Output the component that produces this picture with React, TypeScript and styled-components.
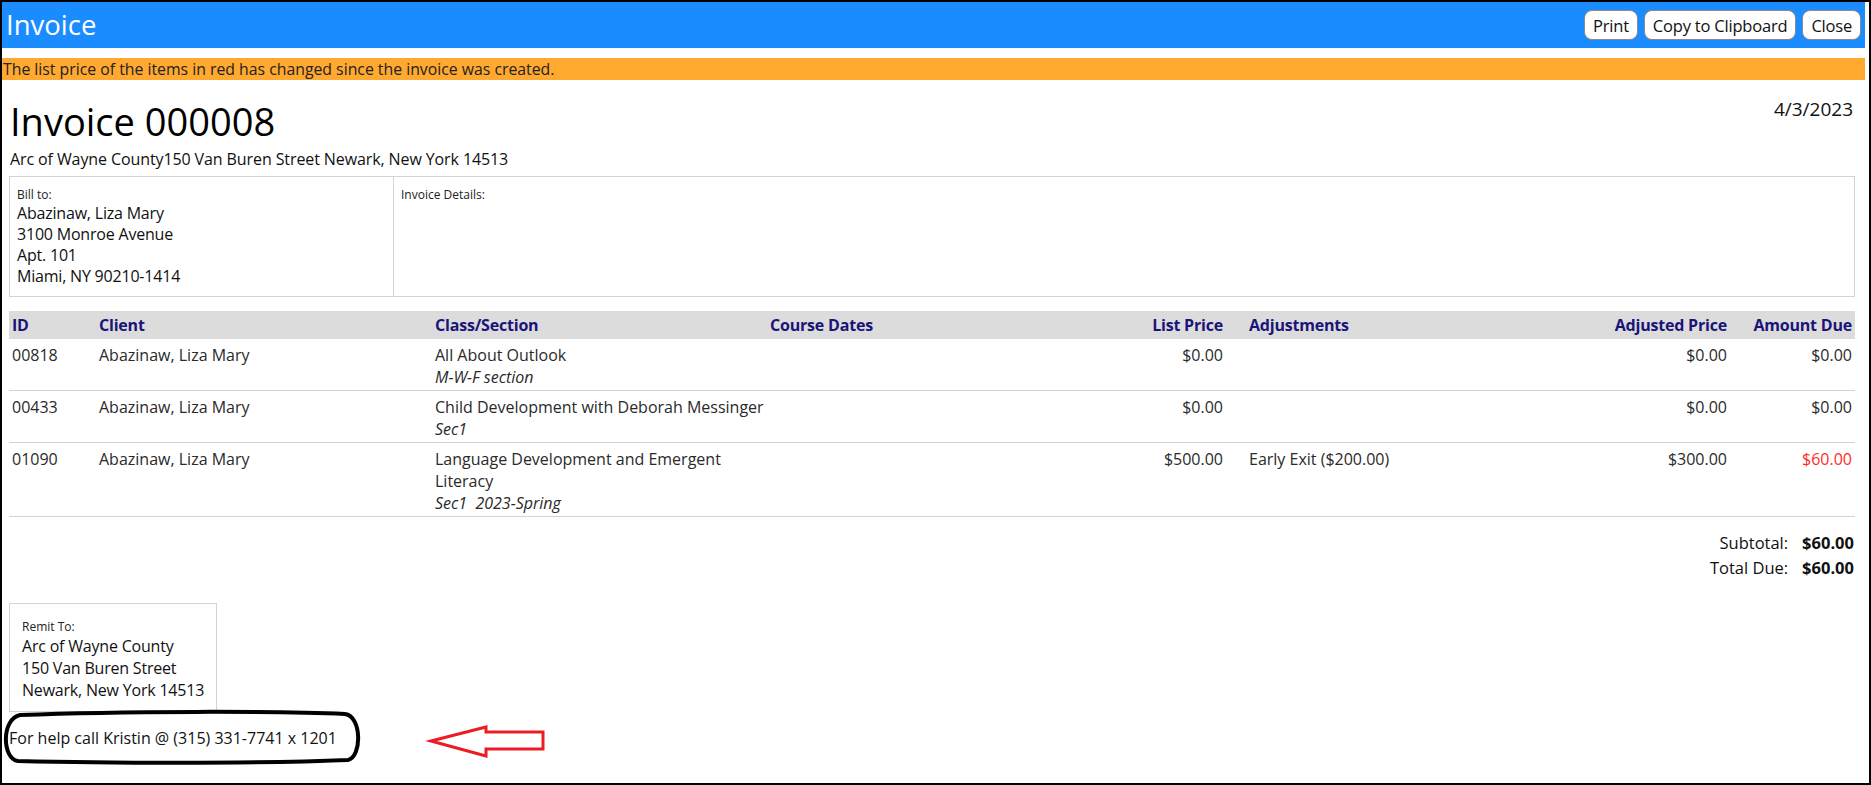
import React from "react";
import styled, { createGlobalStyle } from "styled-components";

const GlobalStyle = createGlobalStyle`
  html, body {
    margin: 0;
    padding: 0;
    background: #fff;
  }
  body {
    font-family: "Open Sans", "Noto Sans", sans-serif;
    color: #111;
  }
  * {
    box-sizing: border-box;
  }
`;

const Frame = styled.div`
  width: 1871px;
  height: 785px;
  border: 2px solid #000;
  overflow: hidden;
  background: #fff;
`;

const Dialog = styled.div`
  width: 1863px;
`;

const TitleBar = styled.div`
  height: 46px;
  background: #1a8cff;
  display: flex;
  align-items: center;
  justify-content: space-between;
  padding: 0 4px;
`;

const DialogTitle = styled.div`
  color: #fff;
  font-size: 27.5px;
  line-height: 46px;
`;

const ButtonGroup = styled.div`
  display: flex;
  gap: 6px;
`;

const ToolButton = styled.button`
  height: 30px;
  padding: 0 8px;
  border: 1px solid #8a8a8a;
  border-radius: 8px;
  background: #fff;
  font-family: "Open Sans", sans-serif;
  font-size: 16.5px;
  letter-spacing: -0.2px;
  color: #111;
`;

const Notice = styled.div`
  margin-top: 10px;
  height: 22px;
  background: #ffa930;
  font-size: 15.8px;
  line-height: 22px;
  padding-left: 1px;
  color: #222;
`;

const Content = styled.div`
  padding: 0 10px 0 7px;
`;

const Heading = styled.div`
  margin-top: 17px;
  display: flex;
  justify-content: space-between;
  align-items: flex-start;
`;

const InvoiceNumber = styled.h1`
  margin: 0;
  padding-left: 1px;
  font-size: 38px;
  font-weight: 400;
  line-height: 48px;
  color: #000;
`;

const InvoiceDate = styled.div`
  font-size: 19px;
  line-height: 24px;
  padding-right: 2px;
  color: #111;
`;

const OrgAddress = styled.div`
  margin-top: 3px;
  font-size: 16px;
  letter-spacing: -0.1px;
  line-height: 22px;
  padding-left: 1px;
`;

const AddressBox = styled.div`
  margin-top: 6px;
  height: 121px;
  display: grid;
  grid-template-columns: 383px 1fr;
  border: 1px solid #d4d4d4;
`;

const AddressCell = styled.div`
  padding: 9px 7px;
  & + & {
    border-left: 1px solid #d4d4d4;
  }
`;

const SmallLabel = styled.div`
  font-size: 12px;
  line-height: 17px;
  color: #222;
`;

const AddressLine = styled.div`
  font-size: 16px;
  letter-spacing: -0.2px;
  line-height: 21px;
  white-space: nowrap;
`;

const RemitLine = styled(AddressLine)`
  line-height: 22px;
`;

const COLUMNS = "87px 336px 335px 299px 160px 344px 160px 125px";

const Table = styled.div`
  margin-top: 14px;
`;

const HeaderRow = styled.div`
  display: grid;
  grid-template-columns: ${COLUMNS};
  height: 28px;
  align-items: center;
  background: #dcdcdc;
`;

const HeaderCell = styled.div<{ $align?: string; $indent?: number }>`
  padding: 0 3px 0 ${(p) => p.$indent ?? 3}px;
  text-align: ${(p) => p.$align ?? "left"};
  font-size: 16px;
  letter-spacing: -0.2px;
  font-weight: 700;
  color: #1b1478;
  white-space: nowrap;
`;

const BodyRow = styled.div`
  display: grid;
  grid-template-columns: ${COLUMNS};
  padding: 5px 0 2px;
  border-bottom: 1px solid #d3d3d3;
`;

const Cell = styled.div<{ $align?: string; $indent?: number; $alert?: boolean }>`
  padding: 0 3px 0 ${(p) => p.$indent ?? 3}px;
  text-align: ${(p) => p.$align ?? "left"};
  font-size: 16px;
  line-height: 22px;
  color: ${(p) => (p.$alert ? "#ff2a2a" : "#2a2a2a")};
  white-space: nowrap;
`;

const SectionName = styled.div`
  font-style: italic;
`;

const Totals = styled.div`
  margin-top: 13px;
  display: grid;
  grid-template-columns: auto auto;
  justify-content: end;
  column-gap: 14px;
  padding-right: 1px;
`;

const TotalLabel = styled.div`
  text-align: right;
  font-size: 16.5px;
  line-height: 25px;
`;

const TotalValue = styled.div`
  text-align: right;
  font-size: 16.5px;
  line-height: 25px;
  font-weight: 700;
`;

const RemitBox = styled.div`
  margin-top: 23px;
  width: 208px;
  border: 1px solid #d4d4d4;
  padding: 14px 6px 10px 12px;
`;

const HelpRow = styled.div`
  position: relative;
  margin-top: 15px;
  font-size: 16px;
  line-height: 22px;
  color: #111;
`;

const Annotation = styled.svg`
  position: absolute;
  left: -9px;
  top: -28px;
  width: 560px;
  height: 70px;
  overflow: visible;
  pointer-events: none;
`;

type Column = { title: string; align?: string; indent?: number };

const columns: Column[] = [
  { title: "ID" },
  { title: "Client" },
  { title: "Class/Section" },
  { title: "Course Dates" },
  { title: "List Price", align: "right" },
  { title: "Adjustments", indent: 23 },
  { title: "Adjusted Price", align: "right" },
  { title: "Amount Due", align: "right" },
];

type Line = {
  id: string;
  client: string;
  course: string[];
  section: string;
  listPrice: string;
  adjustment: string;
  adjusted: string;
  due: string;
  changed?: boolean;
};

const lines: Line[] = [
  {
    id: "00818",
    client: "Abazinaw, Liza Mary",
    course: ["All About Outlook"],
    section: "M-W-F section",
    listPrice: "$0.00",
    adjustment: "",
    adjusted: "$0.00",
    due: "$0.00",
  },
  {
    id: "00433",
    client: "Abazinaw, Liza Mary",
    course: ["Child Development with Deborah Messinger"],
    section: "Sec1",
    listPrice: "$0.00",
    adjustment: "",
    adjusted: "$0.00",
    due: "$0.00",
  },
  {
    id: "01090",
    client: "Abazinaw, Liza Mary",
    course: ["Language Development and Emergent", "Literacy"],
    section: "Sec1\u00a0\u00a02023-Spring",
    listPrice: "$500.00",
    adjustment: "Early Exit ($200.00)",
    adjusted: "$300.00",
    due: "$60.00",
    changed: true,
  },
];

const App: React.FC = () => {
  return (
    <>
      <GlobalStyle />
      <Frame>
        <Dialog>
          <TitleBar>
            <DialogTitle>Invoice</DialogTitle>
            <ButtonGroup>
              <ToolButton>Print</ToolButton>
              <ToolButton>Copy to Clipboard</ToolButton>
              <ToolButton>Close</ToolButton>
            </ButtonGroup>
          </TitleBar>
          <Notice>
            The list price of the items in red has changed since the invoice was created.
          </Notice>
          <Content>
            <Heading>
              <InvoiceNumber>Invoice 000008</InvoiceNumber>
              <InvoiceDate>4/3/2023</InvoiceDate>
            </Heading>
            <OrgAddress>Arc of Wayne County150 Van Buren Street Newark, New York 14513</OrgAddress>

            <AddressBox>
              <AddressCell>
                <SmallLabel>Bill to:</SmallLabel>
                <AddressLine>Abazinaw, Liza Mary</AddressLine>
                <AddressLine>3100 Monroe Avenue</AddressLine>
                <AddressLine>Apt. 101</AddressLine>
                <AddressLine>Miami, NY 90210-1414</AddressLine>
              </AddressCell>
              <AddressCell>
                <SmallLabel>Invoice Details:</SmallLabel>
              </AddressCell>
            </AddressBox>

            <Table>
              <HeaderRow>
                {columns.map((c) => (
                  <HeaderCell key={c.title} $align={c.align} $indent={c.indent}>
                    {c.title}
                  </HeaderCell>
                ))}
              </HeaderRow>
              {lines.map((l) => (
                <BodyRow key={l.id}>
                  <Cell>{l.id}</Cell>
                  <Cell>{l.client}</Cell>
                  <Cell>
                    {l.course.map((t) => (
                      <div key={t}>{t}</div>
                    ))}
                    <SectionName>{l.section}</SectionName>
                  </Cell>
                  <Cell />
                  <Cell $align="right">{l.listPrice}</Cell>
                  <Cell $indent={23}>{l.adjustment}</Cell>
                  <Cell $align="right">{l.adjusted}</Cell>
                  <Cell $align="right" $alert={l.changed}>
                    {l.due}
                  </Cell>
                </BodyRow>
              ))}
            </Table>

            <Totals>
              <TotalLabel>Subtotal:</TotalLabel>
              <TotalValue>$60.00</TotalValue>
              <TotalLabel>Total Due:</TotalLabel>
              <TotalValue>$60.00</TotalValue>
            </Totals>

            <RemitBox>
              <SmallLabel>Remit To:</SmallLabel>
              <RemitLine>Arc of Wayne County</RemitLine>
              <RemitLine>150 Van Buren Street</RemitLine>
              <RemitLine>Newark, New York 14513</RemitLine>
            </RemitBox>

            <HelpRow>
              For help call Kristin @ (315) 331-7741 x 1201
              <Annotation viewBox="0 700 560 70">
                <path
                  d="M 20 716 C 120 712, 280 712, 345 715 C 362 717, 362 758, 348 761 C 250 765, 100 764, 18 762 C 2 760, 1 720, 20 716 Z"
                  fill="none"
                  stroke="#000"
                  strokeWidth="4"
                />
                <polygon
                  points="431,742 486,728 486,733 543,733 543,750 486,750 486,757"
                  fill="none"
                  stroke="#ed1c24"
                  strokeWidth="3"
                />
              </Annotation>
            </HelpRow>
          </Content>
        </Dialog>
      </Frame>
    </>
  );
};

export default App;
